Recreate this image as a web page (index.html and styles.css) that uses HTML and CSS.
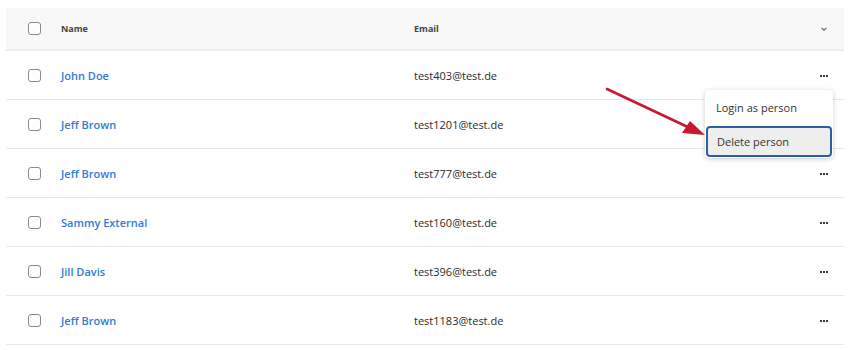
FILE: index.html
```html
<!DOCTYPE html>
<html>

<head>
	<title>People</title>
	<link rel="stylesheet" href="styles.css">
</head>

<body>
	<div class="people">
		<div class="row head">
			<div class="cell"><span class="check"></span></div>
			<div class="cell">Name</div>
			<div class="cell">Email</div>
			<div class="cell actions">
				<svg width="8" height="6" viewBox="0 0 8 6"><path d="M1.5 1.8 L4 4.2 L6.5 1.8" fill="none" stroke="#666" stroke-width="1.1"/></svg>
			</div>
		</div>

		<div class="row">
			<div class="cell"><span class="check"></span></div>
			<div class="cell name">John Doe</div>
			<div class="cell">test403@test.de</div>
			<div class="cell actions"><span class="dots"><i></i><i></i><i></i></span></div>
		</div>
		<div class="row">
			<div class="cell"><span class="check"></span></div>
			<div class="cell name">Jeff Brown</div>
			<div class="cell">test1201@test.de</div>
			<div class="cell actions"></div>
		</div>
		<div class="row">
			<div class="cell"><span class="check"></span></div>
			<div class="cell name">Jeff Brown</div>
			<div class="cell">test777@test.de</div>
			<div class="cell actions"><span class="dots"><i></i><i></i><i></i></span></div>
		</div>
		<div class="row">
			<div class="cell"><span class="check"></span></div>
			<div class="cell name">Sammy External</div>
			<div class="cell">test160@test.de</div>
			<div class="cell actions"><span class="dots"><i></i><i></i><i></i></span></div>
		</div>
		<div class="row">
			<div class="cell"><span class="check"></span></div>
			<div class="cell name">Jill Davis</div>
			<div class="cell">test396@test.de</div>
			<div class="cell actions"><span class="dots"><i></i><i></i><i></i></span></div>
		</div>
		<div class="row">
			<div class="cell"><span class="check"></span></div>
			<div class="cell name">Jeff Brown</div>
			<div class="cell">test1183@test.de</div>
			<div class="cell actions"><span class="dots"><i></i><i></i><i></i></span></div>
		</div>

		<!-- row menu, open on John Doe -->
		<div class="menu">
			<div class="item">Login as person</div>
			<div class="item active">Delete person</div>
		</div>

		<!-- annotation arrow -->
		<svg class="arrow" width="120" height="60" viewBox="0 0 120 60">
			<line x1="3" y1="3" x2="88" y2="43" stroke="#c8172f" stroke-width="2.6" stroke-linecap="round"/>
			<polygon points="101,49 78,47 86,35" fill="#c8172f"/>
		</svg>
	</div>
</body>

</html>
```

FILE: styles.css
```css
body {
	font-family: "Open Sans", Arial, sans-serif;
	background-color: #fff;
	color: #2b2b2b;
	margin: 0;
	padding: 0;
}

.people {
	position: relative;
	width: 838px;
	margin: 8px 6px 0 6px;
}

.row {
	display: grid;
	grid-template-columns: 55px 353px 1fr 40px;
	height: 48px;
	border-bottom: 1px solid #e8e8e8;
	font-size: 11px;
}

.row.head {
	height: 41px;
	background-color: #f8f8f8;
	font-size: 9px;
	font-weight: bold;
	color: #444;
	border-bottom-width: 2px;
	border-bottom-color: #ececec;
}

.cell {
	display: flex;
	align-items: center;
}

.check {
	display: inline-block;
	width: 11px;
	height: 11px;
	margin-left: 22px;
	border: 1px solid #8a8a8a;
	border-radius: 3px;
	background-color: #fff;
}

.name {
	color: #2f7bd6;
	font-weight: 600;
}

.actions {
	justify-content: center;
}

.dots {
	display: flex;
	gap: 1px;
	margin-top: 1px;
}

.dots i {
	width: 2px;
	height: 2px;
	background-color: #3a3a3a;
}

.menu {
	position: absolute;
	left: 699px;
	top: 82px;
	width: 128px;
	padding: 4px 0 1px 0;
	background-color: #fff;
	border-radius: 4px;
	box-shadow: 0 1px 5px rgba(0, 0, 0, 0.2);
	font-size: 11px;
	color: #333;
}

.item {
	height: 32px;
	line-height: 28px;
	padding: 0 11px;
}

.item.active {
	height: 27px;
	line-height: 27px;
	margin: 0 1px;
	padding: 0 9px;
	background-color: #eeeeee;
	border: 2px solid #2e5ea6;
	border-radius: 4px;
}

.arrow {
	position: absolute;
	left: 598px;
	top: 78px;
}
```
